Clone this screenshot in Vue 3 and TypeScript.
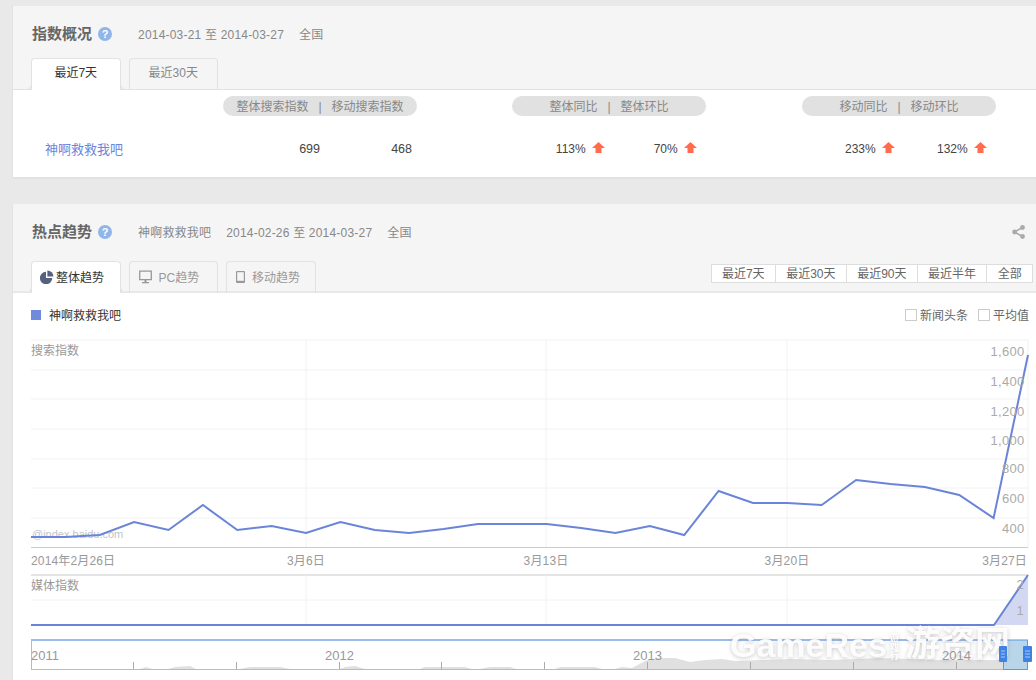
<script setup lang="ts">
const tabs1 = ['最近7天', '最近30天']
const ranges = ['最近7天', '最近30天', '最近90天', '最近半年', '全部']

const groups = [
  {
    left: '整体搜索指数',
    right: '移动搜索指数',
    cells: [
      { text: '699', arrow: false, pad: 'pad0' },
      { text: '468', arrow: false, pad: 'pad5' },
    ],
  },
  {
    left: '整体同比',
    right: '整体环比',
    cells: [
      { text: '113%', arrow: true, pad: 'pad4' },
      { text: '70%', arrow: true, pad: 'pad9' },
    ],
  },
  {
    left: '移动同比',
    right: '移动环比',
    cells: [
      { text: '233%', arrow: true, pad: 'pad4' },
      { text: '132%', arrow: true, pad: 'pad9' },
    ],
  },
]

// chart values are read straight off the page, in page coordinates
const values = [
  537, 537, 535, 522, 530, 505, 530, 526, 533, 522, 530, 533, 529, 524, 524, 524, 528, 533, 526,
  535, 491, 503, 503, 505, 480, 484, 487, 495, 518, 355,
]
const step = (1028 - 31) / 29
const line = values.map((y, i) => `${(31 + i * step).toFixed(1)},${y}`).join(' ')

const hGrid = [340, 370, 399, 429, 459, 488, 518]
const vGrid = [306, 546, 787, 1028]
const yLabels = [
  { t: '1,600', y: 356 },
  { t: '1,400', y: 386 },
  { t: '1,200', y: 416 },
  { t: '1,000', y: 445 },
  { t: '800', y: 473 },
  { t: '600', y: 503 },
  { t: '400', y: 533 },
]
const xLabels = [
  { t: '2014年2月26日', x: 31, a: 'start' },
  { t: '3月6日', x: 306, a: 'middle' },
  { t: '3月13日', x: 546, a: 'middle' },
  { t: '3月20日', x: 787, a: 'middle' },
  { t: '3月27日', x: 1027, a: 'end' },
]
const navTicks = [133, 236, 339, 441, 544, 647, 750, 853, 956]
const navYears = [
  { t: '2011', x: 31 },
  { t: '2012', x: 325 },
  { t: '2013', x: 633 },
  { t: '2014', x: 942 },
]
const navArea =
  '140,669 146,667 152,669 168,669 175,667 190,666 196,669 240,669 250,667 280,667 290,669 340,669 ' +
  '345,667 355,666 365,669 420,669 425,667 465,667 472,669 480,669 490,667 510,667 516,669 555,669 ' +
  '560,667 595,667 602,669 615,669 622,667 632,668 647,660 660,658 675,658 690,662 705,660 722,659 ' +
  '735,661 760,660 790,659 830,660 880,658 940,660 1003,660 1003,669'
const markSmall = ['游', '戏', '行']
</script>

<template>
  <div class="page">
    <section class="panel first">
      <header class="head">
        <div class="title-row">
          <h2 class="title">指数概况</h2>
          <span class="help">?</span>
          <span class="meta">2014-03-21 至 2014-03-27</span>
          <span class="meta">全国</span>
        </div>
        <div class="tabs">
          <div v-for="(t, i) in tabs1" :key="t" class="tab plain" :class="{ active: i === 0 }">{{ t }}</div>
        </div>
      </header>
      <div class="summary">
        <a class="name">神啊救救我吧</a>
        <div v-for="g in groups" :key="g.left" class="group">
          <div class="pill">
            <span>{{ g.left }}</span>
            <i>|</i>
            <span>{{ g.right }}</span>
          </div>
          <div class="cells">
            <div v-for="c in g.cells" :key="c.text" class="cell" :class="[c.pad, { pct: c.arrow }]">
              {{ c.text }}
              <svg v-if="c.arrow" class="up" width="13" height="11" viewBox="0 0 13 11">
                <path d="M6.5 0 13 6H9.5v5h-6V6H0z" fill="#ff6c4f" />
              </svg>
            </div>
          </div>
        </div>
      </div>
    </section>

    <section class="panel second">
      <header class="head">
        <div class="title-row">
          <h2 class="title">热点趋势</h2>
          <span class="help">?</span>
          <span class="meta">神啊救救我吧</span>
          <span class="meta">2014-02-26 至 2014-03-27</span>
          <span class="meta">全国</span>
          <svg class="share" width="13" height="14" viewBox="0 0 13 14">
            <path d="M10.5 2.5 2.5 7l8 4.5" fill="none" stroke="#aaa" stroke-width="1.6" />
            <circle cx="10.5" cy="2.5" r="2.4" fill="#aaa" />
            <circle cx="2.6" cy="7" r="2.4" fill="#aaa" />
            <circle cx="10.5" cy="11.5" r="2.4" fill="#aaa" />
          </svg>
        </div>
        <div class="tabs">
          <div class="tab active t-all">
            <svg width="14" height="14" viewBox="0 0 14 14">
              <path d="M6 1.8v6.3h6.3A6.2 6.2 0 1 1 6 1.8z" fill="#56617f" />
              <path d="M7.4 .6v6h6A6 6 0 0 0 7.4 .6z" fill="#56617f" />
            </svg>
            整体趋势
          </div>
          <div class="tab t-pc">
            <svg width="14" height="14" viewBox="0 0 14 14">
              <path d="M.7 1.2h11.6v8.4H.7z" fill="none" stroke="#999" stroke-width="1.3" />
              <path d="M5.5 10h2v2h-2zM3 12h7v1.2H3z" fill="#999" />
            </svg>
            PC趋势
          </div>
          <div class="tab t-mobile">
            <svg width="14" height="14" viewBox="0 0 14 14">
              <rect x="3" y="1" width="9" height="12" rx="1" fill="#999" />
              <rect x="4.2" y="2.2" width="6.6" height="8.6" fill="#f5f5f5" />
            </svg>
            移动趋势
          </div>
          <div class="ranges">
            <span v-for="r in ranges" :key="r" class="range">{{ r }}</span>
          </div>
        </div>
      </header>

      <div class="legend-row">
        <span class="swatch"></span>
        <span class="legend-name">神啊救救我吧</span>
        <label class="check"><i></i>新闻头条</label>
        <label class="check"><i></i>平均值</label>
      </div>

      <svg class="chart" width="1023" height="350" viewBox="13 330 1023 350">
        <!-- main plot -->
        <line v-for="y in hGrid" :key="y" x1="31" x2="1028" :y1="y" :y2="y" class="grid" />
        <line v-for="x in vGrid" :key="x" :x1="x" :x2="x" y1="340" y2="547" class="grid" />
        <line x1="31" x2="1028" y1="547.5" y2="547.5" stroke="#ccc" />
        <text x="31" y="355" class="label">搜索指数</text>
        <text x="32" y="538" class="stamp">@index.baidu.com</text>
        <polyline :points="line" class="series" />
        <text v-for="l in yLabels" :key="l.t" x="1024.5" :y="l.y" text-anchor="end" class="num">{{ l.t }}</text>
        <text v-for="l in xLabels" :key="l.t" :x="l.x" y="565" :text-anchor="l.a" class="label tick">{{ l.t }}</text>

        <!-- media index -->
        <line x1="31" x2="1028" y1="575" y2="575" stroke="#e4e4e4" stroke-width="2" />
        <line x1="31" x2="1028" y1="600" y2="600" class="grid" />
        <line v-for="x in vGrid.slice(0, 3)" :key="x" :x1="x" :x2="x" y1="575" y2="625" class="grid" />
        <text x="31" y="590" class="label">媒体指数</text>
        <polygon points="994,625 1028,575 1028,625" fill="#d3d8f2" />
        <polyline points="31,625 994,625 1028,575" class="series" />
        <text x="1024" y="589" text-anchor="end" class="num">2</text>
        <text x="1024" y="615" text-anchor="end" class="num">1</text>

        <!-- navigator -->
        <polygon :points="navArea" fill="#e0e0e0" />
        <line x1="31" x2="1004" y1="640" y2="640" stroke="#9cbcec" stroke-width="2" />
        <line x1="31" x2="1028" y1="669.5" y2="669.5" stroke="#bbb" />
        <line x1="31.5" x2="31.5" y1="640" y2="670" stroke="#bbb" />
        <line v-for="x in navTicks" :key="x" :x1="x + 0.5" :x2="x + 0.5" y1="662" y2="669" stroke="#aaa" />
        <rect x="1003.5" y="640" width="24" height="29.5" fill="#b9d5ea" stroke="#5a9ae0" />

        <!-- site watermark sits over the plot, the 2014 label still reads through -->
        <g class="mark">
          <text x="730" y="657" class="mark-latin">GameRes</text>
          <text v-for="(c, i) in markSmall" :key="c" x="890" :y="641 + i * 9" class="mark-small">{{ c }}</text>
          <text x="905" y="656" class="mark-cjk">游资网</text>
        </g>

        <text v-for="n in navYears" :key="n.t" :x="n.x" y="660" class="year">{{ n.t }}</text>
        <rect x="999" y="646" width="8" height="16" rx="1" fill="#3f82e4" />
        <rect x="1023" y="646" width="9" height="16" rx="1" fill="#3f82e4" />
        <path d="M1001 651h4M1001 654h4M1001 657h4M1025 651h5M1025 654h5M1025 657h5" stroke="#a9c8f2" />
      </svg>
    </section>
  </div>
</template>

<style>
html,
body {
  margin: 0;
  height: 680px;
  overflow: hidden;
  background: #e9e9e9;
}
</style>

<style scoped>
.page {
  width: 1036px;
  height: 680px;
  overflow: hidden;
  padding: 6px 0 0 12px;
  box-sizing: border-box;
  font-family: 'Liberation Sans', 'Noto Sans CJK SC', sans-serif;
  font-size: 12px;
  color: #999;
}

.panel {
  width: 1024px;
  background: #fff;
  border-left: 1px solid #e2e2e2;
  box-sizing: border-box;
}
.panel.first {
  height: 173px;
  border-bottom: 2px solid #e2e2e2;
  margin-bottom: 25px;
}
.first .head {
  height: 84px;
  border-bottom: 1px solid #e2e2e2;
}
.second .head {
  height: 89px;
  border-bottom: 2px solid #e8e8e8;
}

.head {
  background: #f5f5f5;
  box-sizing: border-box;
  padding-left: 18px;
  display: flex;
  flex-direction: column;
  justify-content: flex-end;
}

.title-row {
  display: flex;
  align-items: center;
  height: 20px;
  margin-bottom: 14px;
  margin-left: 1px;
}
.second .title-row {
  margin-bottom: 19px;
}
.title {
  margin: 0;
  font-size: 15px;
  font-weight: bold;
  color: #666;
  line-height: 20px;
}
.help {
  width: 14px;
  height: 14px;
  border-radius: 50%;
  margin: 0 26px 0 6px;
  background: #92b5e9;
  color: #fff;
  font-size: 11px;
  font-weight: bold;
  line-height: 14px;
  text-align: center;
}
.meta {
  color: #888;
  margin-right: 15px;
  padding-bottom: 2px;
  letter-spacing: 0.2px;
}
.share {
  margin-left: auto;
  margin-right: 11px;
}

.tabs {
  display: flex;
  gap: 8px;
  margin-bottom: -1px;
  align-items: flex-end;
}
.second .tabs {
  margin-bottom: -2px;
}
.tab {
  position: relative;
  width: 89.5px;
  height: 32px;
  box-sizing: border-box;
  border: 1px solid #e2e2e2;
  border-bottom: none;
  border-radius: 4px 4px 0 0;
  display: flex;
  align-items: center;
  padding-bottom: 2px;
  color: #999;
}
.tab.plain {
  justify-content: center;
  padding-bottom: 6px;
  color: #888;
}
.tab.active {
  background: #fff;
  color: #333;
}
.tab.active::before,
.tab.active::after {
  content: '';
  position: absolute;
  bottom: 0;
  width: 4px;
  height: 4px;
  box-sizing: border-box;
  border-bottom: 1px solid #e2e2e2;
  background: #f5f5f5;
}
.tab.active::before {
  left: -5px;
  border-right: 1px solid #e2e2e2;
  border-radius: 0 0 4px 0;
}
.tab.active::after {
  right: -5px;
  border-left: 1px solid #e2e2e2;
  border-radius: 0 0 0 4px;
}
.t-all {
  padding-left: 8px;
  gap: 2px;
}
.t-pc {
  padding-left: 9px;
  gap: 6px;
}
.t-mobile {
  padding-left: 6px;
  gap: 5px;
}
.ranges {
  display: flex;
  margin-left: auto;
  margin-right: 3px;
  margin-bottom: 10px;
  background: #fff;
  border: 1px solid #ddd;
}
.range {
  height: 17px;
  line-height: 19px;
  padding: 0 10.3px;
  color: #666;
  border-left: 1px solid #ddd;
}
.range:first-child {
  border-left: none;
}

.summary {
  display: flex;
  padding-top: 6px;
  position: relative;
}
.name {
  position: absolute;
  left: 32px;
  top: 49px;
  font-size: 13px;
  color: #6c86dc;
}
.group {
  width: 194px;
  margin-left: 95px;
}
.group:first-of-type {
  margin-left: 210px;
}
.group:last-child {
  margin-left: 96px;
}
.pill {
  height: 20px;
  line-height: 22px;
  background: #e1e1e1;
  border-radius: 10px;
  display: flex;
  justify-content: center;
  gap: 10px;
  color: #888;
}
.pill i {
  font-style: normal;
}
.cells {
  display: flex;
  margin-top: 23px;
}
.cell {
  width: 97px;
  box-sizing: border-box;
  text-align: right;
  font-size: 12.5px;
  color: #444;
  line-height: 20px;
}
.cell.pct {
  font-size: 12px;
}
.up {
  margin-left: 3px;
}
.pad0 {
  padding-right: 0;
}
.pad4 {
  padding-right: 4px;
}
.pad5 {
  padding-right: 5px;
}
.pad9 {
  padding-right: 9px;
}

.legend-row {
  display: flex;
  align-items: center;
  height: 37px;
  padding: 6px 0 0 18px;
  box-sizing: border-box;
}
.swatch {
  width: 10px;
  height: 10px;
  background: #6f8ade;
  margin-right: 8px;
}
.legend-name {
  color: #333;
}
.check {
  display: flex;
  align-items: center;
  color: #666;
  margin-left: 10px;
}
.legend-name + .check {
  margin-left: auto;
}
.check:last-child {
  margin-right: 7px;
}
.check i {
  width: 10px;
  height: 10px;
  border: 1px solid #ccc;
  background: #fff;
  margin-right: 3px;
}

.chart {
  display: block;
}
.grid {
  stroke: #f2f2f2;
  stroke-width: 1;
}
.series {
  fill: none;
  stroke: #6a84d8;
  stroke-width: 2;
}
.label {
  font-size: 12px;
  fill: #999;
}
.tick {
  letter-spacing: 0.15px;
}
.num {
  font-size: 13px;
  fill: #aaa;
  letter-spacing: 0.3px;
}
.year {
  font-size: 13px;
  fill: #999;
}
.stamp {
  font-size: 11px;
  fill: #c4c4c4;
}
.mark {
  fill: rgba(255, 255, 255, 0.92);
  font-weight: bold;
  filter: drop-shadow(0 1px 2px rgba(110, 110, 110, 0.4));
}
.mark-latin {
  font-size: 34px;
}
.mark-cjk {
  font-size: 35px;
}
.mark-small {
  font-size: 9px;
}
</style>
